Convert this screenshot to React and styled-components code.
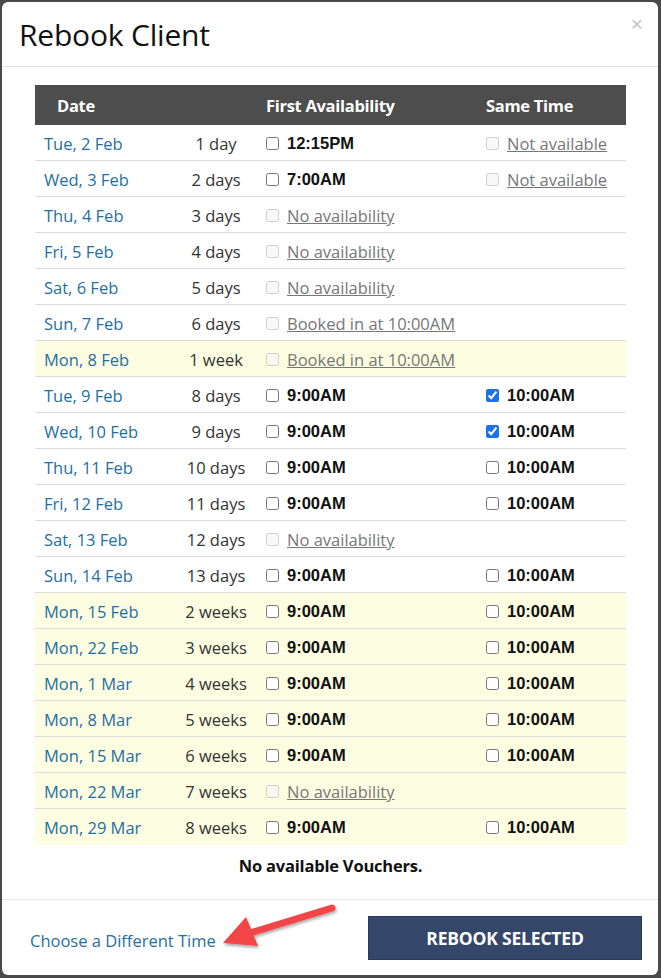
import React from "react";
import styled, { createGlobalStyle } from "styled-components";

const rows = [
  { date: "Tue, 2 Feb", gap: "1 day", first: "12:15PM", same: "na" },
  { date: "Wed, 3 Feb", gap: "2 days", first: "7:00AM", same: "na" },
  { date: "Thu, 4 Feb", gap: "3 days", firstNote: "No availability" },
  { date: "Fri, 5 Feb", gap: "4 days", firstNote: "No availability" },
  { date: "Sat, 6 Feb", gap: "5 days", firstNote: "No availability" },
  { date: "Sun, 7 Feb", gap: "6 days", firstNote: "Booked in at 10:00AM" },
  { date: "Mon, 8 Feb", gap: "1 week", firstNote: "Booked in at 10:00AM", week: true },
  { date: "Tue, 9 Feb", gap: "8 days", first: "9:00AM", same: "10:00AM", checked: true },
  { date: "Wed, 10 Feb", gap: "9 days", first: "9:00AM", same: "10:00AM", checked: true },
  { date: "Thu, 11 Feb", gap: "10 days", first: "9:00AM", same: "10:00AM" },
  { date: "Fri, 12 Feb", gap: "11 days", first: "9:00AM", same: "10:00AM" },
  { date: "Sat, 13 Feb", gap: "12 days", firstNote: "No availability" },
  { date: "Sun, 14 Feb", gap: "13 days", first: "9:00AM", same: "10:00AM" },
  { date: "Mon, 15 Feb", gap: "2 weeks", first: "9:00AM", same: "10:00AM", week: true },
  { date: "Mon, 22 Feb", gap: "3 weeks", first: "9:00AM", same: "10:00AM", week: true },
  { date: "Mon, 1 Mar", gap: "4 weeks", first: "9:00AM", same: "10:00AM", week: true },
  { date: "Mon, 8 Mar", gap: "5 weeks", first: "9:00AM", same: "10:00AM", week: true },
  { date: "Mon, 15 Mar", gap: "6 weeks", first: "9:00AM", same: "10:00AM", week: true },
  { date: "Mon, 22 Mar", gap: "7 weeks", firstNote: "No availability", week: true },
  { date: "Mon, 29 Mar", gap: "8 weeks", first: "9:00AM", same: "10:00AM", week: true },
];

function Slot({ time, note, checked }) {
  if (note) {
    return (
      <SlotCell>
        <Check type="checkbox" disabled />
        <Unavailable>{note}</Unavailable>
      </SlotCell>
    );
  }
  if (!time) return <SlotCell />;
  return (
    <SlotCell>
      <Check type="checkbox" defaultChecked={checked} />
      <Time>{time}</Time>
    </SlotCell>
  );
}

export default function App() {
  return (
    <>
      <GlobalStyle />
      <Modal>
        <ModalHeader>
          <Title>Rebook Client</Title>
          <Close>×</Close>
        </ModalHeader>

        <ModalBody>
          <Table>
            <HeadRow>
              <HeadCell $pad="22px">Date</HeadCell>
              <HeadCell />
              <HeadCell $pad="14px">First Availability</HeadCell>
              <HeadCell $pad="8px">Same Time</HeadCell>
            </HeadRow>
            {rows.map((r) => (
              <Row key={r.date} $week={r.week}>
                <DateCell>{r.date}</DateCell>
                <GapCell>{r.gap}</GapCell>
                <Slot time={r.first} note={r.firstNote} />
                {r.same === "na" ? (
                  <Slot note="Not available" />
                ) : (
                  <Slot time={r.same} checked={r.checked} />
                )}
              </Row>
            ))}
          </Table>
          <Vouchers>No available Vouchers.</Vouchers>
        </ModalBody>

        <Footer>
          <ChooseLink href="#">Choose a Different Time</ChooseLink>
          <RebookButton>REBOOK SELECTED</RebookButton>
          <Arrow width="130" height="50" viewBox="0 0 130 50">
            <defs>
              <filter id="sh" x="-20%" y="-40%" width="140%" height="180%">
                <feDropShadow dx="1" dy="2" stdDeviation="1.5" floodColor="#000" floodOpacity="0.35" />
              </filter>
            </defs>
            <g filter="url(#sh)">
              <line x1="112" y1="8" x2="30" y2="33" stroke="#f24447" strokeWidth="7" strokeLinecap="round" />
              <polygon points="3,43 26,17 38,46" fill="#f24447" />
            </g>
          </Arrow>
        </Footer>
      </Modal>
    </>
  );
}

const GlobalStyle = createGlobalStyle`
  body {
    margin: 0;
    background: #4a4a4a;
    font-family: "Open Sans", "Liberation Sans", sans-serif;
  }
`;

const Modal = styled.div`
  width: 656px;
  height: 973px;
  margin: 2px;
  background: #fff;
  border-radius: 6px;
  display: flex;
  flex-direction: column;
  overflow: hidden;
`;

const ModalHeader = styled.div`
  height: 64px;
  border-bottom: 1px solid #e5e5e5;
  padding: 0 17px;
  display: flex;
  align-items: center;
  justify-content: space-between;
`;

const Title = styled.h1`
  margin: 0;
  font-family: "Open Sans", sans-serif;
  font-weight: 400;
  font-size: 30px;
  letter-spacing: -0.2px;
  color: #111;
`;

const Close = styled.span`
  align-self: flex-start;
  margin-top: 10px;
  margin-right: -2px;
  font-family: "Liberation Sans", sans-serif;
  font-size: 21px;
  color: #c4c4c4;
`;

const ModalBody = styled.div`
  flex: 1;
  padding: 18px 32px 0 33px;
`;

const Table = styled.div`
  display: flex;
  flex-direction: column;
`;

const grid = `
  display: grid;
  grid-template-columns: 145px 72px 226px 1fr;
  align-items: center;
`;

const HeadRow = styled.div`
  ${grid}
  height: 40px;
  background: #4d4d4d;
`;

const HeadCell = styled.div`
  padding-left: ${(p) => p.$pad || "0"};
  font-family: "Open Sans", sans-serif;
  font-weight: 700;
  font-size: 16.5px;
  letter-spacing: -0.3px;
  color: #fff;
`;

const Row = styled.div`
  ${grid}
  box-sizing: content-box;
  height: 33px;
  padding-top: 2px;
  border-bottom: 1px solid #dcdcdc;
  background: ${(p) => (p.$week ? "#fdfde2" : "#fff")};
  font-size: 16.5px;

  &:last-child {
    border-bottom-color: ${(p) => (p.$week ? "#fdfde2" : "#fff")};
  }
`;

const DateCell = styled.div`
  padding-left: 9px;
  color: #1f6fa3;
`;

const GapCell = styled.div`
  text-align: center;
  color: #333;
`;

const SlotCell = styled.div`
  display: flex;
  align-items: center;
  gap: 8px;
  padding-left: 8px;

  &:nth-child(3) {
    padding-left: 14px;
  }
`;

const Check = styled.input`
  width: 13px;
  height: 13px;
  margin: 0;
  accent-color: #1a73e8;
`;

const Time = styled.span`
  font-family: "Liberation Sans", Arial, sans-serif;
  font-weight: 700;
  font-size: 16.5px;
  color: #111;
`;

const Unavailable = styled.span`
  color: #777;
  text-decoration: underline;
`;

const Vouchers = styled.p`
  margin: 9px 0 0;
  text-align: center;
  font-weight: 700;
  font-size: 16.5px;
  letter-spacing: -0.2px;
  color: #111;
`;

const Footer = styled.div`
  position: relative;
  height: 75px;
  border-top: 1px solid #e5e5e5;
  display: flex;
  align-items: center;
  justify-content: space-between;
  padding: 0 16px 0 28px;
`;

const ChooseLink = styled.a`
  margin-top: 5px;
  font-size: 16.5px;
  color: #1f6fa3;
  text-decoration: none;
`;

const RebookButton = styled.button`
  width: 274px;
  height: 44px;
  margin-top: 0;
  background: #34466a;
  border: 1px solid #2a3a5a;
  color: #fff;
  font-family: "Open Sans", sans-serif;
  font-weight: 700;
  font-size: 17.5px;
  letter-spacing: -0.2px;
  cursor: pointer;
`;

const Arrow = styled.svg`
  position: absolute;
  left: 218px;
  top: 0px;
  pointer-events: none;
`;
